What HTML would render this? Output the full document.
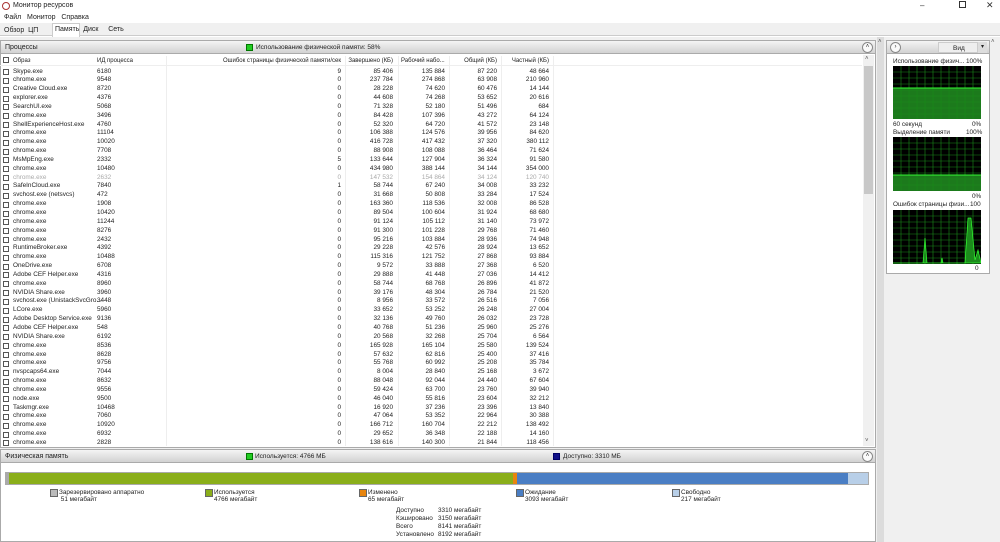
<!DOCTYPE html>
<html><head><meta charset="utf-8"><style>
*{margin:0;padding:0;box-sizing:border-box}
body{width:1000px;height:542px;overflow:hidden;background:#fff;font-family:"Liberation Sans","DejaVu Sans",sans-serif;font-size:6.4px;color:#222;position:relative}
.a{position:absolute}
.hb{position:absolute;background:linear-gradient(#f4f4f4,#d2d2d2);border:1px solid #aaa;height:14px}
.hb span{position:absolute;top:3px;font-size:7px;color:#222}
.up{position:absolute;width:11px;height:11px;border:1px solid #888;border-radius:50%;background:#fafafa;font-size:6px;text-align:center;line-height:9px;color:#333}
#rows{position:absolute;left:0;top:67.5px;width:862px;height:378px;overflow:hidden}
.r{height:8.85px;position:relative;white-space:nowrap}
.r span{position:absolute;top:0;line-height:8.85px}
.r .cb{left:3px;top:1.5px;width:6px;height:6px;border:1px solid #555;background:#fff}
.n{left:13px}.p{left:97px}
.f{right:521px;text-align:right}.z{right:469px}.w{right:417px}.o{right:365px}.c{right:313px}
.g span{color:#aaa}
.sq{position:absolute;width:8px;height:8px;border:1px solid #666}
.h{position:absolute;top:58px;font-size:6px;white-space:nowrap;text-align:right}
</style></head><body>
<!-- title -->
<div class="a" style="left:2px;top:2px;width:8px;height:8px;border:1px solid #a33;border-radius:50%"></div>
<div class="a" style="left:13px;top:2px;font-size:7px">Монитор ресурсов</div>
<div class="a" style="left:920px;top:1px;font-size:8px;color:#333">–</div>
<div class="a" style="left:959px;top:1px;width:7px;height:7px;border:1px solid #333"></div>
<div class="a" style="left:986px;top:0px;font-size:9px;color:#333">✕</div>
<div class="a" style="left:4px;top:14px;font-size:7px">Файл&nbsp;&nbsp;&nbsp;Монитор&nbsp;&nbsp;&nbsp;Справка</div>
<!-- tabs -->
<div class="a" style="left:0;top:23px;width:1000px;height:13px;background:#f0f0f0;border-bottom:1px solid #ccc"></div>
<div class="a" style="left:52px;top:23px;width:28px;height:14px;background:#fff;border:1px solid #ccc;border-bottom:none"></div>
<div class="a" style="left:4px;top:27px;font-size:7px">Обзор&nbsp;&nbsp;ЦП</div>
<div class="a" style="left:55px;top:26px;font-size:7px">Память&nbsp;&nbsp;Диск&nbsp;&nbsp;&nbsp;&nbsp;&nbsp;Сеть</div>
<div class="a" style="left:0;top:37px;width:1000px;height:505px;background:#f0f0f0"></div>
<!-- processes panel -->
<div class="a" style="left:0;top:40px;width:876px;height:408px;background:#fff;border:1px solid #aaa"></div>
<div class="hb" style="left:0;top:40px;width:876px"><span style="left:4px">Процессы</span>
<span style="left:245px;top:3px;width:7px;height:7px;background:#2c2;border:1px solid #070"></span><span style="left:255px;font-size:6.5px">Использование физической памяти: 58%</span>
<div class="up" style="left:861px;top:1px">˄</div></div>
<div class="a" style="left:0;top:55px;width:862px;height:11px;border-bottom:1px solid #eee"></div>
<div class="a" style="left:3px;top:57px;width:6px;height:6px;border:1px solid #555"></div>
<div class="a" style="left:13px;top:58px;font-size:6px">Образ</div>
<div class="a" style="left:97px;top:58px;font-size:6px">ИД процесса</div>
<div class="h" style="right:659px">Ошибок страницы физической памяти/сек</div>
<div class="h" style="right:607px">Завершено (КБ)</div>
<div class="h" style="left:401px">Рабочий набо...</div>
<div class="h" style="right:503px">Общий (КБ)</div>
<div class="h" style="right:451px">Частный (КБ)</div>
<div class="a" style="left:166px;top:56px;width:1px;height:390px;background:#eee"></div>
<div class="a" style="left:345px;top:56px;width:1px;height:390px;background:#eee"></div>
<div class="a" style="left:398px;top:56px;width:1px;height:390px;background:#eee"></div>
<div class="a" style="left:449px;top:56px;width:1px;height:390px;background:#eee"></div>
<div class="a" style="left:501px;top:56px;width:1px;height:390px;background:#eee"></div>
<div class="a" style="left:553px;top:56px;width:1px;height:390px;background:#eee"></div>
<!-- scrollbar -->
<div class="a" style="left:863px;top:55px;width:11px;height:391px;background:#f0f0f0"></div>
<div class="a" style="left:864px;top:66px;width:9px;height:128px;background:#c8c8c8"></div>
<div class="a" style="left:865px;top:56px;font-size:6px;color:#555">˄</div>
<div class="a" style="left:865px;top:438px;font-size:6px;color:#555">˅</div>
<div class="a" style="left:877px;top:37px;width:7px;height:505px;background:#dcdcdc"></div>
<div class="a" style="left:878px;top:39px;font-size:6px;color:#555">˄</div>
<div id="rows">
<div class="r"><span class="cb"></span><span class="n">Skype.exe</span><span class="p">6180</span><span class="f">9</span><span class="z">85 406</span><span class="w">135 884</span><span class="o">87 220</span><span class="c">48 664</span></div>
<div class="r"><span class="cb"></span><span class="n">chrome.exe</span><span class="p">9548</span><span class="f">0</span><span class="z">237 784</span><span class="w">274 868</span><span class="o">63 908</span><span class="c">210 960</span></div>
<div class="r"><span class="cb"></span><span class="n">Creative Cloud.exe</span><span class="p">8720</span><span class="f">0</span><span class="z">28 228</span><span class="w">74 620</span><span class="o">60 476</span><span class="c">14 144</span></div>
<div class="r"><span class="cb"></span><span class="n">explorer.exe</span><span class="p">4376</span><span class="f">0</span><span class="z">44 608</span><span class="w">74 268</span><span class="o">53 652</span><span class="c">20 616</span></div>
<div class="r"><span class="cb"></span><span class="n">SearchUI.exe</span><span class="p">5068</span><span class="f">0</span><span class="z">71 328</span><span class="w">52 180</span><span class="o">51 496</span><span class="c">684</span></div>
<div class="r"><span class="cb"></span><span class="n">chrome.exe</span><span class="p">3496</span><span class="f">0</span><span class="z">84 428</span><span class="w">107 396</span><span class="o">43 272</span><span class="c">64 124</span></div>
<div class="r"><span class="cb"></span><span class="n">ShellExperienceHost.exe</span><span class="p">4760</span><span class="f">0</span><span class="z">52 320</span><span class="w">64 720</span><span class="o">41 572</span><span class="c">23 148</span></div>
<div class="r"><span class="cb"></span><span class="n">chrome.exe</span><span class="p">11104</span><span class="f">0</span><span class="z">106 388</span><span class="w">124 576</span><span class="o">39 956</span><span class="c">84 620</span></div>
<div class="r"><span class="cb"></span><span class="n">chrome.exe</span><span class="p">10020</span><span class="f">0</span><span class="z">416 728</span><span class="w">417 432</span><span class="o">37 320</span><span class="c">380 112</span></div>
<div class="r"><span class="cb"></span><span class="n">chrome.exe</span><span class="p">7708</span><span class="f">0</span><span class="z">88 908</span><span class="w">108 088</span><span class="o">36 464</span><span class="c">71 624</span></div>
<div class="r"><span class="cb"></span><span class="n">MsMpEng.exe</span><span class="p">2332</span><span class="f">5</span><span class="z">133 644</span><span class="w">127 904</span><span class="o">36 324</span><span class="c">91 580</span></div>
<div class="r"><span class="cb"></span><span class="n">chrome.exe</span><span class="p">10480</span><span class="f">0</span><span class="z">434 980</span><span class="w">388 144</span><span class="o">34 144</span><span class="c">354 000</span></div>
<div class="r g"><span class="cb"></span><span class="n">chrome.exe</span><span class="p">2632</span><span class="f">0</span><span class="z">147 532</span><span class="w">154 864</span><span class="o">34 124</span><span class="c">120 740</span></div>
<div class="r"><span class="cb"></span><span class="n">SafeInCloud.exe</span><span class="p">7840</span><span class="f">1</span><span class="z">58 744</span><span class="w">67 240</span><span class="o">34 008</span><span class="c">33 232</span></div>
<div class="r"><span class="cb"></span><span class="n">svchost.exe (netsvcs)</span><span class="p">472</span><span class="f">0</span><span class="z">31 668</span><span class="w">50 808</span><span class="o">33 284</span><span class="c">17 524</span></div>
<div class="r"><span class="cb"></span><span class="n">chrome.exe</span><span class="p">1908</span><span class="f">0</span><span class="z">163 360</span><span class="w">118 536</span><span class="o">32 008</span><span class="c">86 528</span></div>
<div class="r"><span class="cb"></span><span class="n">chrome.exe</span><span class="p">10420</span><span class="f">0</span><span class="z">89 504</span><span class="w">100 604</span><span class="o">31 924</span><span class="c">68 680</span></div>
<div class="r"><span class="cb"></span><span class="n">chrome.exe</span><span class="p">11244</span><span class="f">0</span><span class="z">91 124</span><span class="w">105 112</span><span class="o">31 140</span><span class="c">73 972</span></div>
<div class="r"><span class="cb"></span><span class="n">chrome.exe</span><span class="p">8276</span><span class="f">0</span><span class="z">91 300</span><span class="w">101 228</span><span class="o">29 768</span><span class="c">71 460</span></div>
<div class="r"><span class="cb"></span><span class="n">chrome.exe</span><span class="p">2432</span><span class="f">0</span><span class="z">95 216</span><span class="w">103 884</span><span class="o">28 936</span><span class="c">74 948</span></div>
<div class="r"><span class="cb"></span><span class="n">RuntimeBroker.exe</span><span class="p">4392</span><span class="f">0</span><span class="z">29 228</span><span class="w">42 576</span><span class="o">28 924</span><span class="c">13 652</span></div>
<div class="r"><span class="cb"></span><span class="n">chrome.exe</span><span class="p">10488</span><span class="f">0</span><span class="z">115 316</span><span class="w">121 752</span><span class="o">27 868</span><span class="c">93 884</span></div>
<div class="r"><span class="cb"></span><span class="n">OneDrive.exe</span><span class="p">6708</span><span class="f">0</span><span class="z">9 572</span><span class="w">33 888</span><span class="o">27 368</span><span class="c">6 520</span></div>
<div class="r"><span class="cb"></span><span class="n">Adobe CEF Helper.exe</span><span class="p">4316</span><span class="f">0</span><span class="z">29 888</span><span class="w">41 448</span><span class="o">27 036</span><span class="c">14 412</span></div>
<div class="r"><span class="cb"></span><span class="n">chrome.exe</span><span class="p">8960</span><span class="f">0</span><span class="z">58 744</span><span class="w">68 768</span><span class="o">26 896</span><span class="c">41 872</span></div>
<div class="r"><span class="cb"></span><span class="n">NVIDIA Share.exe</span><span class="p">3960</span><span class="f">0</span><span class="z">39 176</span><span class="w">48 304</span><span class="o">26 784</span><span class="c">21 520</span></div>
<div class="r"><span class="cb"></span><span class="n">svchost.exe (UnistackSvcGro...</span><span class="p">3448</span><span class="f">0</span><span class="z">8 956</span><span class="w">33 572</span><span class="o">26 516</span><span class="c">7 056</span></div>
<div class="r"><span class="cb"></span><span class="n">LCore.exe</span><span class="p">5960</span><span class="f">0</span><span class="z">33 652</span><span class="w">53 252</span><span class="o">26 248</span><span class="c">27 004</span></div>
<div class="r"><span class="cb"></span><span class="n">Adobe Desktop Service.exe</span><span class="p">9136</span><span class="f">0</span><span class="z">32 136</span><span class="w">49 760</span><span class="o">26 032</span><span class="c">23 728</span></div>
<div class="r"><span class="cb"></span><span class="n">Adobe CEF Helper.exe</span><span class="p">548</span><span class="f">0</span><span class="z">40 768</span><span class="w">51 236</span><span class="o">25 960</span><span class="c">25 276</span></div>
<div class="r"><span class="cb"></span><span class="n">NVIDIA Share.exe</span><span class="p">6192</span><span class="f">0</span><span class="z">20 568</span><span class="w">32 268</span><span class="o">25 704</span><span class="c">6 564</span></div>
<div class="r"><span class="cb"></span><span class="n">chrome.exe</span><span class="p">8536</span><span class="f">0</span><span class="z">165 928</span><span class="w">165 104</span><span class="o">25 580</span><span class="c">139 524</span></div>
<div class="r"><span class="cb"></span><span class="n">chrome.exe</span><span class="p">8628</span><span class="f">0</span><span class="z">57 632</span><span class="w">62 816</span><span class="o">25 400</span><span class="c">37 416</span></div>
<div class="r"><span class="cb"></span><span class="n">chrome.exe</span><span class="p">9756</span><span class="f">0</span><span class="z">55 768</span><span class="w">60 992</span><span class="o">25 208</span><span class="c">35 784</span></div>
<div class="r"><span class="cb"></span><span class="n">nvspcaps64.exe</span><span class="p">7044</span><span class="f">0</span><span class="z">8 004</span><span class="w">28 840</span><span class="o">25 168</span><span class="c">3 672</span></div>
<div class="r"><span class="cb"></span><span class="n">chrome.exe</span><span class="p">8632</span><span class="f">0</span><span class="z">88 048</span><span class="w">92 044</span><span class="o">24 440</span><span class="c">67 604</span></div>
<div class="r"><span class="cb"></span><span class="n">chrome.exe</span><span class="p">9556</span><span class="f">0</span><span class="z">59 424</span><span class="w">63 700</span><span class="o">23 760</span><span class="c">39 940</span></div>
<div class="r"><span class="cb"></span><span class="n">node.exe</span><span class="p">9500</span><span class="f">0</span><span class="z">46 040</span><span class="w">55 816</span><span class="o">23 604</span><span class="c">32 212</span></div>
<div class="r"><span class="cb"></span><span class="n">Taskmgr.exe</span><span class="p">10468</span><span class="f">0</span><span class="z">16 920</span><span class="w">37 236</span><span class="o">23 396</span><span class="c">13 840</span></div>
<div class="r"><span class="cb"></span><span class="n">chrome.exe</span><span class="p">7060</span><span class="f">0</span><span class="z">47 064</span><span class="w">53 352</span><span class="o">22 964</span><span class="c">30 388</span></div>
<div class="r"><span class="cb"></span><span class="n">chrome.exe</span><span class="p">10920</span><span class="f">0</span><span class="z">166 712</span><span class="w">160 704</span><span class="o">22 212</span><span class="c">138 492</span></div>
<div class="r"><span class="cb"></span><span class="n">chrome.exe</span><span class="p">6932</span><span class="f">0</span><span class="z">29 652</span><span class="w">36 348</span><span class="o">22 188</span><span class="c">14 160</span></div>
<div class="r"><span class="cb"></span><span class="n">chrome.exe</span><span class="p">2828</span><span class="f">0</span><span class="z">138 616</span><span class="w">140 300</span><span class="o">21 844</span><span class="c">118 456</span></div>
</div>
<!-- physical memory -->
<div class="a" style="left:0;top:449px;width:876px;height:93px;background:#fff;border:1px solid #aaa"></div>
<div class="hb" style="left:0;top:449px;width:876px"><span style="left:4px">Физическая память</span>
<span style="left:245px;top:3px;width:7px;height:7px;background:#2c2;border:1px solid #070"></span><span style="left:254px;font-size:6.5px">Используется: 4766 МБ</span>
<span style="left:552px;top:3px;width:7px;height:7px;background:#118;border:1px solid #006"></span><span style="left:562px;font-size:6.5px">Доступно: 3310 МБ</span>
<div class="up" style="left:861px;top:1px">˄</div></div>
<div class="a" style="left:5px;top:472px;width:864px;height:13px;background:#b8cfe8;border:1px solid #aaa"></div>
<div class="a" style="left:6px;top:473px;width:3px;height:11px;background:#aaa"></div>
<div class="a" style="left:9px;top:473px;width:504px;height:11px;background:#8aae1a"></div>
<div class="a" style="left:513px;top:473px;width:4px;height:11px;background:#e8850e"></div>
<div class="a" style="left:517px;top:473px;width:331px;height:11px;background:#4a7ec4"></div>
<div class="sq" style="left:50px;top:489px;background:#bbb"></div><div class="a" style="left:59px;top:489px">Зарезервировано аппаратно<br>&nbsp;51 мегабайт</div>
<div class="sq" style="left:205px;top:489px;background:#8aae1a"></div><div class="a" style="left:214px;top:489px">Используется<br>4766 мегабайт</div>
<div class="sq" style="left:359px;top:489px;background:#e8850e"></div><div class="a" style="left:368px;top:489px">Изменено<br>65 мегабайт</div>
<div class="sq" style="left:516px;top:489px;background:#4a7ec4"></div><div class="a" style="left:525px;top:489px">Ожидание<br>3093 мегабайт</div>
<div class="sq" style="left:672px;top:489px;background:#b8cfe8"></div><div class="a" style="left:681px;top:489px">Свободно<br>217 мегабайт</div>
<div class="a" style="left:396px;top:507px;line-height:8px">Доступно<br>Кэшировано<br>Всего<br>Установлено</div>
<div class="a" style="left:438px;top:507px;line-height:8px">3310 мегабайт<br>3150 мегабайт<br>8141 мегабайт<br>8192 мегабайт</div>
<!-- right panel -->
<div class="a" style="left:886px;top:40px;width:104px;height:234px;background:#fff;border:1px solid #aaa"></div>
<div class="hb" style="left:886px;top:40px;width:104px"><div class="up" style="left:3px;top:1px">›</div>
<div class="a" style="left:51px;top:1px;width:40px;height:11px;background:#eee;border:1px solid #ccc;font-size:6.5px;padding:2px 0 0 14px">Вид</div>
<div class="a" style="left:91px;top:1px;width:9px;height:11px;background:#ddd;font-size:6px;text-align:center;line-height:11px">▾</div></div>
<div class="a" style="left:991px;top:39px;font-size:6px;color:#555">˄</div>
<div class="a" style="left:893px;top:58px">Использование физич...</div><div class="a" style="left:966px;top:58px">100%</div>
<svg class="a" style="left:893px;top:66px" width="88" height="53"><rect width="88" height="53" fill="#000"/><rect y="22" width="88" height="31" fill="#1c7a1c"/><g stroke="#1a8a1a" stroke-width="0.6"><path d="M8 0V53M16 0V53M24 0V53M32 0V53M40 0V53M48 0V53M56 0V53M64 0V53M72 0V53M80 0V53M0 6H88M0 12H88M0 18H88M0 24H88M0 30H88M0 36H88M0 42H88M0 48H88"/></g><path d="M0 22H88" stroke="#3f3" stroke-width="1"/></svg>
<div class="a" style="left:893px;top:121px">60 секунд</div><div class="a" style="left:972px;top:121px">0%</div>
<div class="a" style="left:893px;top:129px">Выделение памяти</div><div class="a" style="left:966px;top:129px">100%</div>
<svg class="a" style="left:893px;top:137px" width="88" height="54"><rect width="88" height="54" fill="#000"/><rect y="38" width="88" height="16" fill="#1c7a1c"/><g stroke="#1a8a1a" stroke-width="0.6"><path d="M8 0V54M16 0V54M24 0V54M32 0V54M40 0V54M48 0V54M56 0V54M64 0V54M72 0V54M80 0V54M0 6H88M0 12H88M0 18H88M0 24H88M0 30H88M0 36H88M0 42H88M0 48H88"/></g><path d="M0 38H88" stroke="#3f3"/></svg>
<div class="a" style="left:972px;top:193px">0%</div>
<div class="a" style="left:893px;top:201px">Ошибок страницы физи...</div><div class="a" style="left:970px;top:201px">100</div>
<svg class="a" style="left:893px;top:210px" width="88" height="54"><rect width="88" height="54" fill="#000"/><g stroke="#1a8a1a" stroke-width="0.6"><path d="M8 0V54M16 0V54M24 0V54M32 0V54M40 0V54M48 0V54M56 0V54M64 0V54M72 0V54M80 0V54M0 6H88M0 12H88M0 18H88M0 24H88M0 30H88M0 36H88M0 42H88M0 48H88"/></g><path d="M0 53L30 53L32 28L34 53L48 53L49 48L50 53L72 53L75 8L78 8L82 50L85 40L88 53Z" fill="#1c8a1c" stroke="#3f3" stroke-width="0.7"/></svg>
<div class="a" style="left:975px;top:265px">0</div>
</body></html>
